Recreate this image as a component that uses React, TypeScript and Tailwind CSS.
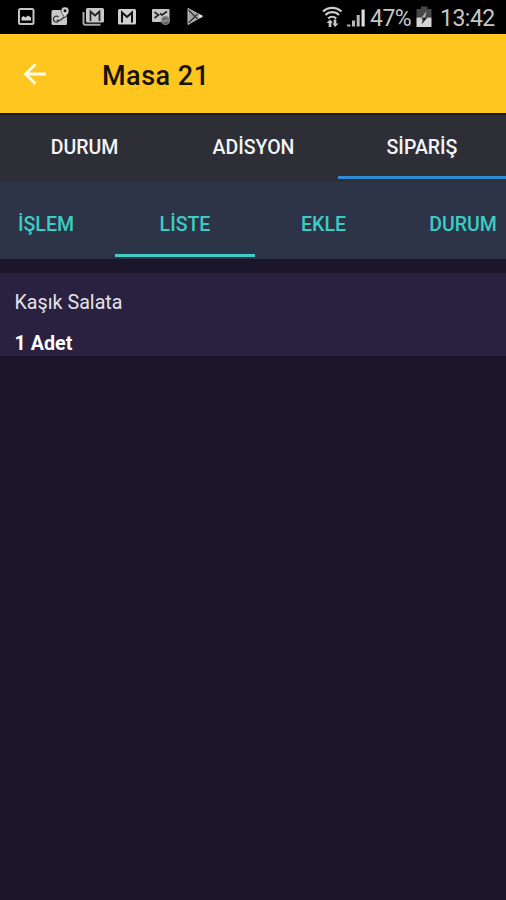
import { useState } from "react";

const TABS = ["DURUM", "ADİSYON", "SİPARİŞ"];

const SUB_TABS = [
  { label: "İŞLEM", cell: "w-[115px] pr-[23px]" },
  { label: "LİSTE", cell: "w-[140px]" },
  { label: "EKLE", cell: "w-[137px]" },
  { label: "DURUM", cell: "w-[142px]" },
];

const ORDERS = [{ name: "Kaşık Salata", quantity: 1 }];

function NotificationIcons() {
  return (
    <svg width="190" height="20" viewBox="17 8 190 20" fill="none" className="ml-[17px]">
      {/* Gallery */}
      <rect x="19" y="10" width="14.500" height="15" rx="1.500" stroke="#c4c4c4" strokeWidth="2" />
      <path d="M21.500 21.500v-3l2-1.500 2 1.500 2.500-2 3 2v3z" fill="#d2d2d2" />

      {/* Maps */}
      <path d="M53 11h8.200c0 3 1.800 5.400 3.600 7.500l2.200-1V24.500a1.500 1.500 0 0 1-1.500 1.500H53A1.500 1.500 0 0 1 51.500 24.500V12.500A1.500 1.500 0 0 1 53 11z" fill="#c8c8c8" />
      <path d="M58.500 18a3 3 0 1 0 .7 3.300h-2.500M60 21.500l5-4" stroke="#333" strokeWidth="1.300" />
      <path d="M65 8a3.900 3.900 0 0 1 3.900 3.900c0 2.500-2.700 4.200-3.900 7.200-1.200-3-3.900-4.700-3.900-7.200A3.900 3.900 0 0 1 65 8z" fill="#d4d4d4" stroke="#222" strokeWidth=".5" />
      <circle cx="65" cy="11.800" r="1.500" fill="#111" />

      {/* Stacked mails */}
      <path d="M83.500 13v11.200a1.500 1.500 0 0 0 1.500 1.500h15.500" stroke="#a8a8a8" strokeWidth="2" />
      <rect x="86" y="9" width="18" height="14.500" rx="1.500" fill="#c8c8c8" />
      <path d="M90.500 22V12.500l4.500 4 4.500-4V22" stroke="#222" strokeWidth="1.700" />

      {/* Mail */}
      <rect x="118" y="10" width="18" height="15.500" rx="1.500" fill="#d0d0d0" />
      <path d="M122 23.500V13.500l5 4.500 5-4.500v10" stroke="#111" strokeWidth="2" />

      {/* Mail with sync badge */}
      <rect x="152" y="10" width="17.500" height="13" rx="1" fill="#c4c4c4" />
      <path d="M154.500 13l4 3-4 3M167 12.500l-5 3.500-2-1.500" stroke="#222" strokeWidth="1.600" />
      <circle cx="165.500" cy="21.500" r="4.500" fill="#858585" />
      <path d="M163 21a2.600 2.600 0 0 1 4.500-1M168 22.500a2.600 2.600 0 0 1-4.500 1" stroke="#444" strokeWidth="1" />

      {/* Play store */}
      <path d="M188 9.500l14.500 7.700L188 25.500z" fill="#a6a6a6" stroke="#c0c0c0" strokeLinejoin="round" />
      <path d="M188.500 11l9 9M188.500 24l9-9" stroke="#303030" strokeWidth="1.200" />
      <circle cx="200.500" cy="17.300" r="1.600" fill="#e4e4e4" />
    </svg>
  );
}

function SignalIcons() {
  return (
    <svg width="46" height="22" viewBox="320 6 46 22" fill="none">
      {/* Wifi */}
      <g stroke="#cccccc" strokeWidth="2.200">
        <path d="M322 11.500a13.500 13.500 0 0 1 18.500 0" />
        <path d="M324.500 15a9.500 9.500 0 0 1 13.500 0" />
        <path d="M327.200 18.500a5.500 5.500 0 0 1 8 0" />
      </g>
      <path d="M329 19.500l-3.500 3.500h2.200v4h2.600v-4h1v-1zM334 27l3.500-3.500h-2.200v-4h-2.600v4h-1.200z" fill="#c8c8c8" />
      {/* Mobile signal */}
      <path d="M346 24.500h3.500v2H346z" fill="#aaa" />
      <path d="M351 20.500h3v6h-3zM355.700 15h3v11.500h-3z" fill="#b8b8b8" />
      <path d="M360.500 9.500h3.200v17h-3.200z" fill="#ddd" />
    </svg>
  );
}

function BatteryIcon() {
  return (
    <svg width="16" height="22" viewBox="415 6 16 22" fill="none">
      <path d="M420 6.500h6.500V9h4v8.500h-15V9h4.500z" fill="#484848" />
      <path d="M415.500 17.500h15v9.500h-15z" fill="#d6d6d6" />
      <path d="M425.500 11l-5 7h3.500z" fill="#b5b5b5" />
      <path d="M422 17.500h4.500l-6 7 1.500-5h-2z" fill="#222" />
    </svg>
  );
}

function StatusBar() {
  return (
    <div className="flex h-[34px] items-center bg-black text-[#c6c6c6]">
      <NotificationIcons />
      <div className="ml-auto flex items-center">
        <SignalIcons />
        <span className="ml-[3px] mt-[2px] w-[46px] whitespace-nowrap text-[23px] leading-none tracking-[-0.5px]">47%</span>
        <BatteryIcon />
        <span className="ml-[8px] mr-[9px] mt-[2px] w-[57px] whitespace-nowrap text-[23px] leading-none tracking-[-0.5px]">13:42</span>
      </div>
    </div>
  );
}

export default function App() {
  const [activeTab, setActiveTab] = useState(2);
  const [activeSubTab, setActiveSubTab] = useState(1);

  return (
    <div className="flex h-[900px] w-[506px] flex-col overflow-hidden bg-[#1b1629] font-['Roboto','Noto_Sans',sans-serif]">
      <StatusBar />

      {/* Header */}
      <header className="flex h-[79px] items-center bg-[#ffc620] pl-[23px]">
        <button aria-label="Geri">
          <svg width="24" height="24" viewBox="0 0 24 24" fill="none" stroke="#fffbe8" strokeWidth="2.800">
            <path d="M23 12H3M12.500 2.200L2.500 12l10 9.800" />
          </svg>
        </button>
        <h1 className="ml-[55px] mt-[5px] text-[27px] font-medium leading-none tracking-[0.5px] text-[#17120a]">Masa 21</h1>
      </header>

      {/* Tabs */}
      <nav className="grid h-[69px] shrink-0 grid-cols-[169px_169px_168px] border-t-2 border-[#1b1830] bg-[#2e2e37]">
        {TABS.map((tab, index) => (
          <button
            key={tab}
            onClick={() => setActiveTab(index)}
            className="flex flex-col items-center text-[19.5px] font-medium leading-none text-[#f4f4f6]"
          >
            <span className="mt-[23px]">{tab}</span>
            {index === activeTab && <span className="mb-[3px] mt-auto h-[3px] w-full bg-[#2f8cd4]" />}
          </button>
        ))}
      </nav>

      {/* Sub tabs */}
      <nav className="flex h-[77px] shrink-0 overflow-hidden bg-[#2e3448]">
        {SUB_TABS.map((tab, index) => (
          <button
            key={tab.label}
            onClick={() => setActiveSubTab(index)}
            className={`flex shrink-0 flex-col items-center text-[19.5px] font-medium leading-none text-[#3bccc3] ${tab.cell}`}
          >
            <span className="mt-[33px]">{tab.label}</span>
            {index === activeSubTab && <span className="mb-[2px] mt-auto h-[3px] w-full bg-[#3fcdc4]" />}
          </button>
        ))}
      </nav>

      {/* Orders */}
      <ul className="mt-[14px]">
        {ORDERS.map((order) => (
          <li key={order.name} className="h-[83px] border-b border-[#2c2747] bg-[#29213f] pl-[14.5px] pt-[19px] text-[19.7px] leading-[22px]">
            <p className="text-[#e4e2ea]">{order.name}</p>
            <p className="mt-[19px] font-bold text-white">{order.quantity} Adet</p>
          </li>
        ))}
      </ul>
    </div>
  );
}
